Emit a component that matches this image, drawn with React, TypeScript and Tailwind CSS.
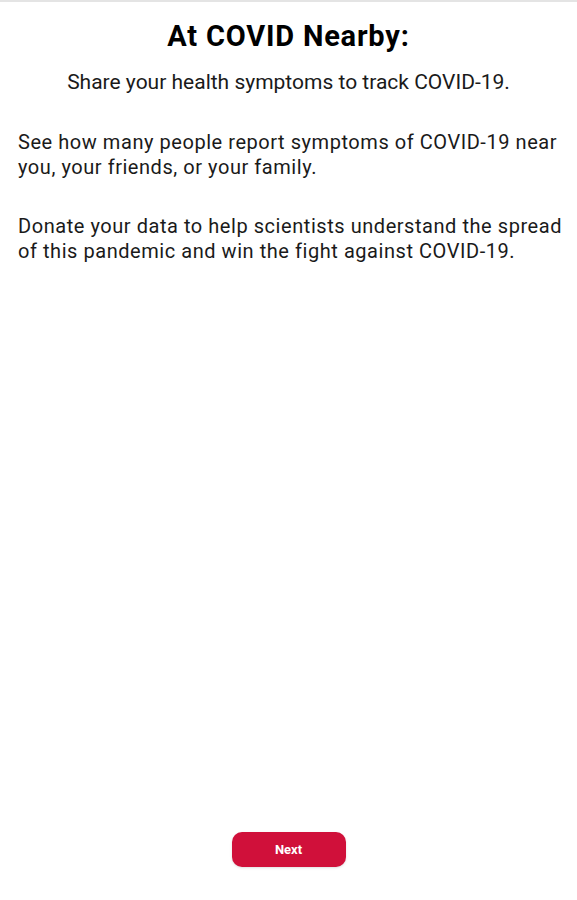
import React from 'react';

export default function App() {
  return (
    <div className="w-[577px] h-[900px] bg-white flex flex-col font-['Roboto',sans-serif] text-[#1a1a1a]">
      <div className="h-[2px] bg-[#e4e4e4]" />
      <div className="flex flex-col pl-[18px] pr-[8px]">
        <h1 className="mt-[16px] pr-[10px] text-center text-[29px] leading-[36px] font-bold tracking-[0.8px] text-black">At COVID Nearby:</h1>
        <p className="mt-[16px] pr-[10px] text-center text-[21px] leading-[25px]">Share your health symptoms to track COVID-19.</p>
        <p className="mt-[35px] text-[20px] leading-[25px] tracking-[0.55px]">
          See how many people report symptoms of COVID-19 near you, your friends, or your family.
        </p>
        <p className="mt-[34px] text-[20px] leading-[25px] tracking-[0.55px]">
          Donate your data to help scientists understand the spread of this pandemic and win the fight against COVID-19.
        </p>
      </div>
      <div className="flex-1" />
      <div className="flex justify-center mb-[33px]">
        <button className="w-[114px] h-[35px] rounded-[10px] bg-[#d0103a] text-white text-[13px] font-bold shadow-sm">
          Next
        </button>
      </div>
    </div>
  );
}
